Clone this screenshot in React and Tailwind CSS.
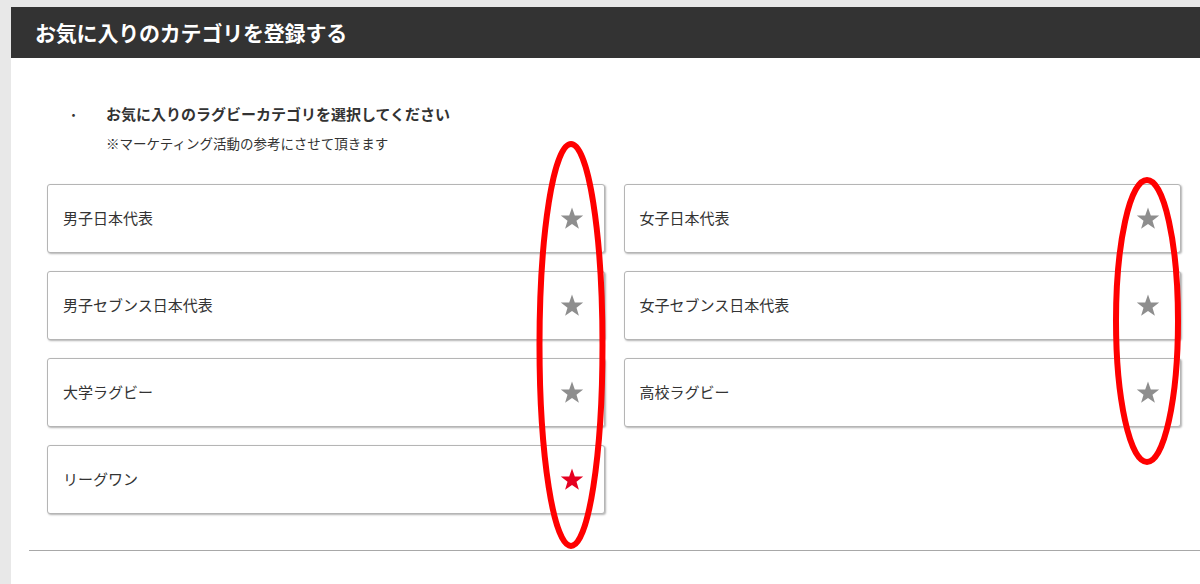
import React from 'react';

const categories = [
    { name: '男子日本代表', fav: false },
    { name: '女子日本代表', fav: false },
    { name: '男子セブンス日本代表', fav: false },
    { name: '女子セブンス日本代表', fav: false },
    { name: '大学ラグビー', fav: false },
    { name: '高校ラグビー', fav: false },
    { name: 'リーグワン', fav: true },
];

const StarIcon = ({ active }) => (
    <svg width="24" height="23" viewBox="0 0 24 23" className={active ? 'text-[#e60020]' : 'text-[#8e8e8e]'}>
        <polygon
            fill="currentColor"
            points="12,0.5 14.8,8.4 23.2,8.6 16.5,13.7 18.9,21.8 12,17 5.1,21.8 7.5,13.7 0.8,8.6 9.2,8.4"
        />
    </svg>
);

const CategoryCard = ({ name, fav }) => (
    <div className="h-[69px] flex items-center justify-between pl-[15px] pr-[20px] bg-white border border-[#b5b5b5] rounded-[3px] shadow-[1px_1px_2px_rgba(0,0,0,0.3)] cursor-pointer">
        <span className="text-[15px] text-[#333]">{name}</span>
        <StarIcon active={fav} />
    </div>
);

const App = () => {
    return (
        <div
            className="relative w-[1200px] h-[584px] overflow-hidden bg-[#e8e8e8] pt-[7px] pl-[11px]"
            style={{ fontFamily: '"Noto Sans CJK JP", "Noto Sans", sans-serif' }}
        >
            {/* Title bar */}
            <div className="h-[51px] bg-[#333333] flex items-center pl-[24px]">
                <h1 className="text-[21px] font-bold text-white tracking-[-0.2px]">お気に入りのカテゴリを登録する</h1>
            </div>

            {/* Body */}
            <div className="bg-white h-full pt-[45px]">
                <div className="flex items-center pl-[56px]">
                    <span className="w-[39px] text-[13px] text-[#333]">・</span>
                    <span className="text-[15px] font-bold text-[#333]">お気に入りのラグビーカテゴリを選択してください</span>
                </div>
                <p className="pl-[95px] mt-[7px] text-[13.5px] text-[#333]">※マーケティング活動の参考にさせて頂きます</p>

                <div className="grid grid-cols-2 gap-x-[19px] gap-y-[18px] w-[1134px] ml-[36px] mt-[31px]">
                    {categories.map((c) => (
                        <CategoryCard key={c.name} name={c.name} fav={c.fav} />
                    ))}
                </div>

                <div className="ml-[18px] mt-[36px] border-t border-[#a8a8a8]" />
            </div>

            {/* Red annotation marks */}
            <svg className="absolute inset-0 pointer-events-none" width="1200" height="584">
                <ellipse cx="571" cy="345" rx="31.5" ry="201" fill="none" stroke="#ff0000" strokeWidth="6" />
                <ellipse cx="1147" cy="321" rx="31" ry="141" fill="none" stroke="#ff0000" strokeWidth="6" />
            </svg>
        </div>
    );
};

export default App;
